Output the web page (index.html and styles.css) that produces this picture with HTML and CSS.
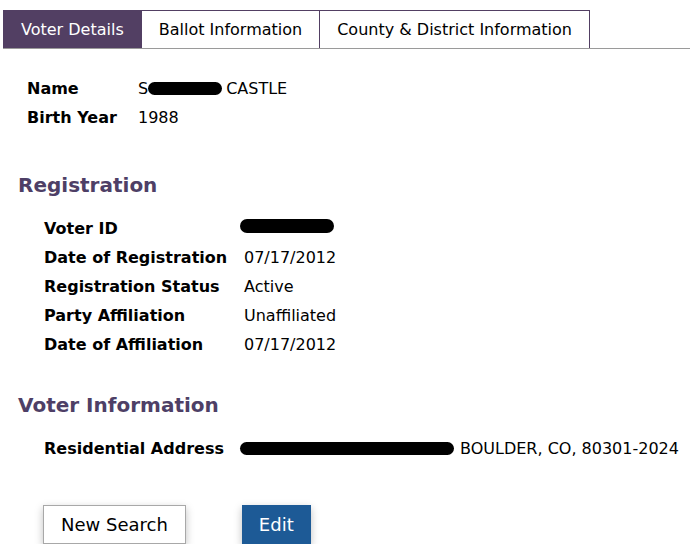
FILE: index.html
```html
<!DOCTYPE html>
<html>
<head>
    <title>Voter Details</title>
    <link rel="stylesheet" href="styles.css">
</head>
<body>
    <div class="tabs">
        <div class="tab active">Voter Details</div>
        <div class="tab">Ballot Information</div>
        <div class="tab">County &amp; District Information</div>
    </div>

    <div class="panel">
        <div class="info top">
            <div class="row">
                <span class="label">Name</span>
                <span class="value">S<span class="redact r-name"></span>CASTLE</span>
            </div>
            <div class="row">
                <span class="label">Birth Year</span>
                <span class="value">1988</span>
            </div>
        </div>

        <h2>Registration</h2>
        <div class="info">
            <div class="row">
                <span class="label">Voter ID</span>
                <span class="value"><span class="redact r-id"></span></span>
            </div>
            <div class="row">
                <span class="label">Date of Registration</span>
                <span class="value">07/17/2012</span>
            </div>
            <div class="row">
                <span class="label">Registration Status</span>
                <span class="value">Active</span>
            </div>
            <div class="row">
                <span class="label">Party Affiliation</span>
                <span class="value">Unaffiliated</span>
            </div>
            <div class="row">
                <span class="label">Date of Affiliation</span>
                <span class="value">07/17/2012</span>
            </div>
        </div>

        <h2 class="second">Voter Information</h2>
        <div class="info">
            <div class="row">
                <span class="label">Residential Address</span>
                <span class="value"><span class="redact r-addr"></span>BOULDER, CO, 80301-2024</span>
            </div>
        </div>

        <div class="actions">
            <button class="btn">New Search</button>
            <button class="btn primary">Edit</button>
        </div>
    </div>
</body>
</html>
```

FILE: styles.css
```css
body {
    margin: 0;
    padding: 10px 0 0 3px;
    font-family: 'DejaVu Sans', Verdana, sans-serif;
    color: #000;
    background: #fff;
}

.tabs {
    display: flex;
    border-bottom: 1px solid #9a9a9a;
}

.tab {
    padding: 0 17px;
    height: 37px;
    line-height: 37px;
    font-size: 16px;
    border: 1px solid #523f63;
    border-bottom: none;
    margin-left: -1px;
}

.tab.active {
    background-color: #523f63;
    color: #fff;
    margin-left: 0;
}

.panel {
    padding: 30px 0 0 15px;
}

.info {
    display: grid;
    grid-template-columns: 200px 1fr;
    row-gap: 10px;
    padding-left: 26px;
    font-size: 16px;
}

.info.top {
    padding-left: 9px;
    grid-template-columns: 111px 1fr;
}

.row {
    display: contents;
}

.label {
    font-weight: bold;
}

.value {
    white-space: nowrap;
}

.redact {
    display: inline-block;
    background: #000;
    height: 13px;
    vertical-align: -1px;
    border-radius: 8px;
}

.r-name {
    width: 74px;
    margin-right: 4px;
}

.r-id {
    width: 94px;
    height: 14px;
    vertical-align: 1px;
    margin-left: -4px;
}

.r-addr {
    width: 214px;
    margin-left: -4px;
    margin-right: 6px;
}

h2 {
    font-size: 20px;
    color: #4e3f66;
    margin: 46px 0 22px 0;
}

h2.second {
    margin-top: 39px;
}

.actions {
    display: flex;
    gap: 56px;
    margin: 47px 0 0 25px;
}

.btn {
    font-family: 'DejaVu Sans', Verdana, sans-serif;
    font-size: 18px;
    height: 39px;
    padding: 0 17px;
    background: #fff;
    color: #000;
    border: 1px solid #a8a8a8;
    box-shadow: 0 3px 8px rgba(0, 0, 0, 0.25);
}

.btn.primary {
    background-color: #1d5a96;
    color: #fff;
    border-color: #1d5a96;
    padding: 0 16px;
}
```
